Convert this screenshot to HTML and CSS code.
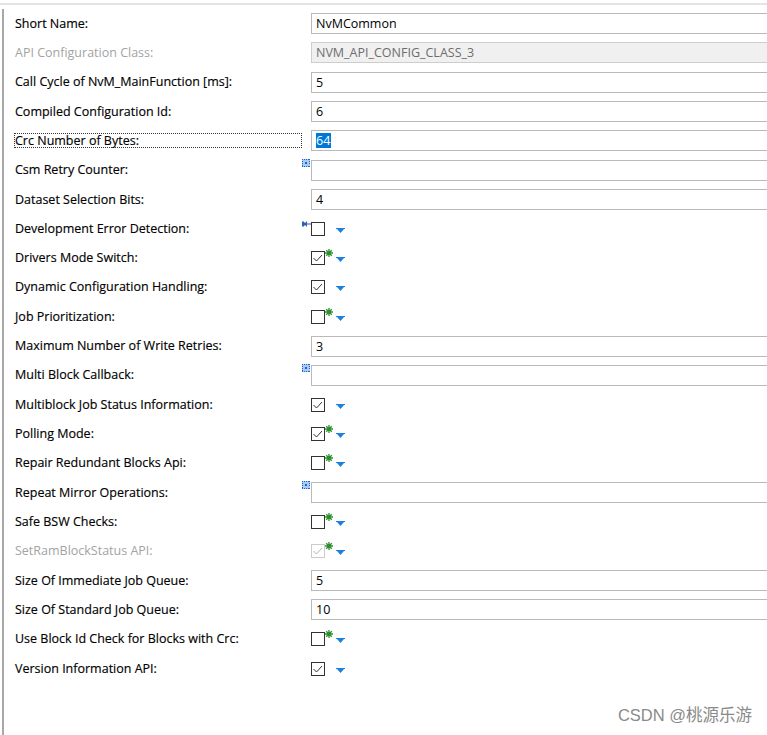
FILE: index.html
```html
<!DOCTYPE html>
<html lang="en">
<head>
<meta charset="utf-8">
<title>NvMCommon</title>
<link rel="stylesheet" href="styles.css">
</head>
<body>
<div class="topline"></div>
<div class="panel">
  <div class="row"><div class="label">Short Name:</div><div class="value"><div class="field">NvMCommon</div></div></div>
  <div class="row"><div class="label disabled">API Configuration Class:</div><div class="value"><div class="field ro">NVM_API_CONFIG_CLASS_3</div></div></div>
  <div class="row"><div class="label">Call Cycle of NvM_MainFunction [ms]:</div><div class="value"><div class="field">5</div></div></div>
  <div class="row"><div class="label">Compiled Configuration Id:</div><div class="value"><div class="field">6</div></div></div>
  <div class="row"><div class="label"><span class="focus">Crc Number of Bytes:</span></div><div class="value"><div class="field"><span class="sel">64</span></div></div></div>
  <div class="row"><div class="label">Csm Retry Counter:</div><div class="value"><div class="field"><svg class="dots" width="8" height="8" viewBox="0 0 8 8"><rect x="0" y="0" width="8" height="8" fill="#a9cbf3"/><path d="M0 0h1v1H0zM2 0h1v1H2zM4 0h1v1H4zM6 0h2v1H6zM0 2h1v1H0zM7 2h1v1H7zM0 4h1v1H0zM7 4h1v1H7zM0 6h1v2H0zM2 7h1v1H2zM4 7h1v1H4zM6 7h2v1H6zM3 3h2v2H3z" fill="#1f66c9"/></svg></div></div></div>
  <div class="row"><div class="label">Dataset Selection Bits:</div><div class="value"><div class="field">4</div></div></div>
  <div class="row"><div class="label">Development Error Detection:</div><div class="value"><div class="check">
    <span class="box"><svg class="pin" width="9" height="6" viewBox="0 0 9 6"><path d="M0 0.5h2v1h2v-1h1v5h-1v-1h-2v1h-2z" fill="#2e62b8"/><path d="M5 2.5h4v1h-4z" fill="#3a5f9a"/></svg><svg width="14" height="14" viewBox="0 0 14 14"><rect x="0.5" y="0.5" width="13" height="13" fill="#fff" stroke="#333"/></svg></span>
    <svg class="arrow" width="9" height="5" viewBox="0 0 9 5"><path d="M0 0h9v1H0z M1 1h7L4.5 5z" fill="#1d7fe0"/></svg></div></div></div>
  <div class="row"><div class="label">Drivers Mode Switch:</div><div class="value"><div class="check">
    <span class="box"><svg width="14" height="14" viewBox="0 0 14 14"><rect x="0.5" y="0.5" width="13" height="13" fill="#fff" stroke="#333"/><polyline points="2.5,7 5.5,10 11,4" fill="none" stroke="#333"/></svg><svg class="star" width="8" height="8" viewBox="0 0 8 8"><path d="M4 0v8M0 4h8M1.2 1.2l5.6 5.6M6.8 1.2l-5.6 5.6" stroke="#2b8f2b" stroke-width="1.3"/><circle cx="4" cy="4" r="1.8" fill="#2b8f2b"/></svg></span>
    <svg class="arrow" width="9" height="5" viewBox="0 0 9 5"><path d="M0 0h9v1H0z M1 1h7L4.5 5z" fill="#1d7fe0"/></svg></div></div></div>
  <div class="row"><div class="label">Dynamic Configuration Handling:</div><div class="value"><div class="check">
    <span class="box"><svg width="14" height="14" viewBox="0 0 14 14"><rect x="0.5" y="0.5" width="13" height="13" fill="#fff" stroke="#333"/><polyline points="2.5,7 5.5,10 11,4" fill="none" stroke="#333"/></svg></span>
    <svg class="arrow" width="9" height="5" viewBox="0 0 9 5"><path d="M0 0h9v1H0z M1 1h7L4.5 5z" fill="#1d7fe0"/></svg></div></div></div>
  <div class="row"><div class="label">Job Prioritization:</div><div class="value"><div class="check">
    <span class="box"><svg width="14" height="14" viewBox="0 0 14 14"><rect x="0.5" y="0.5" width="13" height="13" fill="#fff" stroke="#333"/></svg><svg class="star" width="8" height="8" viewBox="0 0 8 8"><path d="M4 0v8M0 4h8M1.2 1.2l5.6 5.6M6.8 1.2l-5.6 5.6" stroke="#2b8f2b" stroke-width="1.3"/><circle cx="4" cy="4" r="1.8" fill="#2b8f2b"/></svg></span>
    <svg class="arrow" width="9" height="5" viewBox="0 0 9 5"><path d="M0 0h9v1H0z M1 1h7L4.5 5z" fill="#1d7fe0"/></svg></div></div></div>
  <div class="row"><div class="label">Maximum Number of Write Retries:</div><div class="value"><div class="field">3</div></div></div>
  <div class="row"><div class="label">Multi Block Callback:</div><div class="value"><div class="field"><svg class="dots" width="8" height="8" viewBox="0 0 8 8"><rect x="0" y="0" width="8" height="8" fill="#a9cbf3"/><path d="M0 0h1v1H0zM2 0h1v1H2zM4 0h1v1H4zM6 0h2v1H6zM0 2h1v1H0zM7 2h1v1H7zM0 4h1v1H0zM7 4h1v1H7zM0 6h1v2H0zM2 7h1v1H2zM4 7h1v1H4zM6 7h2v1H6zM3 3h2v2H3z" fill="#1f66c9"/></svg></div></div></div>
  <div class="row"><div class="label">Multiblock Job Status Information:</div><div class="value"><div class="check">
    <span class="box"><svg width="14" height="14" viewBox="0 0 14 14"><rect x="0.5" y="0.5" width="13" height="13" fill="#fff" stroke="#333"/><polyline points="2.5,7 5.5,10 11,4" fill="none" stroke="#333"/></svg></span>
    <svg class="arrow" width="9" height="5" viewBox="0 0 9 5"><path d="M0 0h9v1H0z M1 1h7L4.5 5z" fill="#1d7fe0"/></svg></div></div></div>
  <div class="row"><div class="label">Polling Mode:</div><div class="value"><div class="check">
    <span class="box"><svg width="14" height="14" viewBox="0 0 14 14"><rect x="0.5" y="0.5" width="13" height="13" fill="#fff" stroke="#333"/><polyline points="2.5,7 5.5,10 11,4" fill="none" stroke="#333"/></svg><svg class="star" width="8" height="8" viewBox="0 0 8 8"><path d="M4 0v8M0 4h8M1.2 1.2l5.6 5.6M6.8 1.2l-5.6 5.6" stroke="#2b8f2b" stroke-width="1.3"/><circle cx="4" cy="4" r="1.8" fill="#2b8f2b"/></svg></span>
    <svg class="arrow" width="9" height="5" viewBox="0 0 9 5"><path d="M0 0h9v1H0z M1 1h7L4.5 5z" fill="#1d7fe0"/></svg></div></div></div>
  <div class="row"><div class="label">Repair Redundant Blocks Api:</div><div class="value"><div class="check">
    <span class="box"><svg width="14" height="14" viewBox="0 0 14 14"><rect x="0.5" y="0.5" width="13" height="13" fill="#fff" stroke="#333"/></svg><svg class="star" width="8" height="8" viewBox="0 0 8 8"><path d="M4 0v8M0 4h8M1.2 1.2l5.6 5.6M6.8 1.2l-5.6 5.6" stroke="#2b8f2b" stroke-width="1.3"/><circle cx="4" cy="4" r="1.8" fill="#2b8f2b"/></svg></span>
    <svg class="arrow" width="9" height="5" viewBox="0 0 9 5"><path d="M0 0h9v1H0z M1 1h7L4.5 5z" fill="#1d7fe0"/></svg></div></div></div>
  <div class="row"><div class="label">Repeat Mirror Operations:</div><div class="value"><div class="field"><svg class="dots" width="8" height="8" viewBox="0 0 8 8"><rect x="0" y="0" width="8" height="8" fill="#a9cbf3"/><path d="M0 0h1v1H0zM2 0h1v1H2zM4 0h1v1H4zM6 0h2v1H6zM0 2h1v1H0zM7 2h1v1H7zM0 4h1v1H0zM7 4h1v1H7zM0 6h1v2H0zM2 7h1v1H2zM4 7h1v1H4zM6 7h2v1H6zM3 3h2v2H3z" fill="#1f66c9"/></svg></div></div></div>
  <div class="row"><div class="label">Safe BSW Checks:</div><div class="value"><div class="check">
    <span class="box"><svg width="14" height="14" viewBox="0 0 14 14"><rect x="0.5" y="0.5" width="13" height="13" fill="#fff" stroke="#333"/></svg><svg class="star" width="8" height="8" viewBox="0 0 8 8"><path d="M4 0v8M0 4h8M1.2 1.2l5.6 5.6M6.8 1.2l-5.6 5.6" stroke="#2b8f2b" stroke-width="1.3"/><circle cx="4" cy="4" r="1.8" fill="#2b8f2b"/></svg></span>
    <svg class="arrow" width="9" height="5" viewBox="0 0 9 5"><path d="M0 0h9v1H0z M1 1h7L4.5 5z" fill="#1d7fe0"/></svg></div></div></div>
  <div class="row"><div class="label disabled">SetRamBlockStatus API:</div><div class="value"><div class="check">
    <span class="box"><svg width="14" height="14" viewBox="0 0 14 14"><rect x="0.5" y="0.5" width="13" height="13" fill="#fff" stroke="#cccccc"/><polyline points="2.5,7 5.5,10 11,4" fill="none" stroke="#b3b3b3"/></svg><svg class="star" width="8" height="8" viewBox="0 0 8 8"><path d="M4 0v8M0 4h8M1.2 1.2l5.6 5.6M6.8 1.2l-5.6 5.6" stroke="#2b8f2b" stroke-width="1.3"/><circle cx="4" cy="4" r="1.8" fill="#2b8f2b"/></svg></span>
    <svg class="arrow" width="9" height="5" viewBox="0 0 9 5"><path d="M0 0h9v1H0z M1 1h7L4.5 5z" fill="#1d7fe0"/></svg></div></div></div>
  <div class="row"><div class="label">Size Of Immediate Job Queue:</div><div class="value"><div class="field">5</div></div></div>
  <div class="row"><div class="label">Size Of Standard Job Queue:</div><div class="value"><div class="field">10</div></div></div>
  <div class="row"><div class="label">Use Block Id Check for Blocks with Crc:</div><div class="value"><div class="check">
    <span class="box"><svg width="14" height="14" viewBox="0 0 14 14"><rect x="0.5" y="0.5" width="13" height="13" fill="#fff" stroke="#333"/></svg><svg class="star" width="8" height="8" viewBox="0 0 8 8"><path d="M4 0v8M0 4h8M1.2 1.2l5.6 5.6M6.8 1.2l-5.6 5.6" stroke="#2b8f2b" stroke-width="1.3"/><circle cx="4" cy="4" r="1.8" fill="#2b8f2b"/></svg></span>
    <svg class="arrow" width="9" height="5" viewBox="0 0 9 5"><path d="M0 0h9v1H0z M1 1h7L4.5 5z" fill="#1d7fe0"/></svg></div></div></div>
  <div class="row"><div class="label">Version Information API:</div><div class="value"><div class="check">
    <span class="box"><svg width="14" height="14" viewBox="0 0 14 14"><rect x="0.5" y="0.5" width="13" height="13" fill="#fff" stroke="#333"/><polyline points="2.5,7 5.5,10 11,4" fill="none" stroke="#333"/></svg></span>
    <svg class="arrow" width="9" height="5" viewBox="0 0 9 5"><path d="M0 0h9v1H0z M1 1h7L4.5 5z" fill="#1d7fe0"/></svg></div></div></div>
</div>
<div class="watermark">CSDN @桃源乐游</div>
</body>
</html>
```
FILE: styles.css
```css
html, body {
  margin: 0;
  padding: 0;
  overflow: hidden;
  background: #ffffff;
  height: 735px;
}
body {
  font-family: "Open Sans", "Noto Sans", sans-serif;
  font-size: 12.5px;
  color: #000;
  position: relative;
}
.topline {
  height: 2px;
  margin-top: 3px;
  background: #e4e4e4;
}
.panel {
  margin-top: 4px;
  margin-left: 2px;
  border-left: 2px solid #a8a8a8;
  padding-left: 11px;
  height: 726px;
}
.row {
  display: grid;
  grid-template-columns: 296px 1fr;
  align-items: center;
  height: 29.32px;
}
.label {
  white-space: nowrap;
  line-height: 14px;
  -webkit-text-stroke: 0.15px #000;
}
.label.disabled {
  color: #a3a3a3;
  -webkit-text-stroke: 0;
}
.focus {
  display: inline-block;
  box-sizing: border-box;
  width: 288px;
  height: 15px;
  border: 1px dotted #333;
  margin-left: -1px;
  line-height: 13px;
}
.value {
  position: relative;
}
.field {
  position: relative;
  box-sizing: border-box;
  height: 21px;
  width: 480px;
  border: 1px solid #bababa;
  background: #fff;
  padding-left: 4px;
  line-height: 19px;
  white-space: nowrap;
}
.field.ro {
  background: #f0f0f0;
  border-color: #cdcdcd;
  color: #6d6d6d;
}
.sel {
  display: inline-block;
  background: #0078d7;
  color: #fff;
  line-height: 15px;
  padding-right: 1px;
}
.dots {
  position: absolute;
  left: -10px;
  top: -2px;
  display: block;
}
.check {
  display: flex;
  align-items: center;
  height: 21px;
}
.box {
  position: relative;
  display: block;
  width: 14px;
  height: 14px;
}
.box svg {
  display: block;
}
.star {
  position: absolute;
  left: 14px;
  top: -2px;
}
.pin {
  position: absolute;
  left: -9px;
  top: -1px;
}
.arrow {
  display: block;
  margin-left: 11px;
  margin-top: 3px;
}
.watermark {
  position: absolute;
  right: 15px;
  bottom: 9px;
  font-family: "Liberation Sans", "Noto Sans CJK SC", sans-serif;
  font-size: 16.5px;
  color: #8a8a8a;
}
```
